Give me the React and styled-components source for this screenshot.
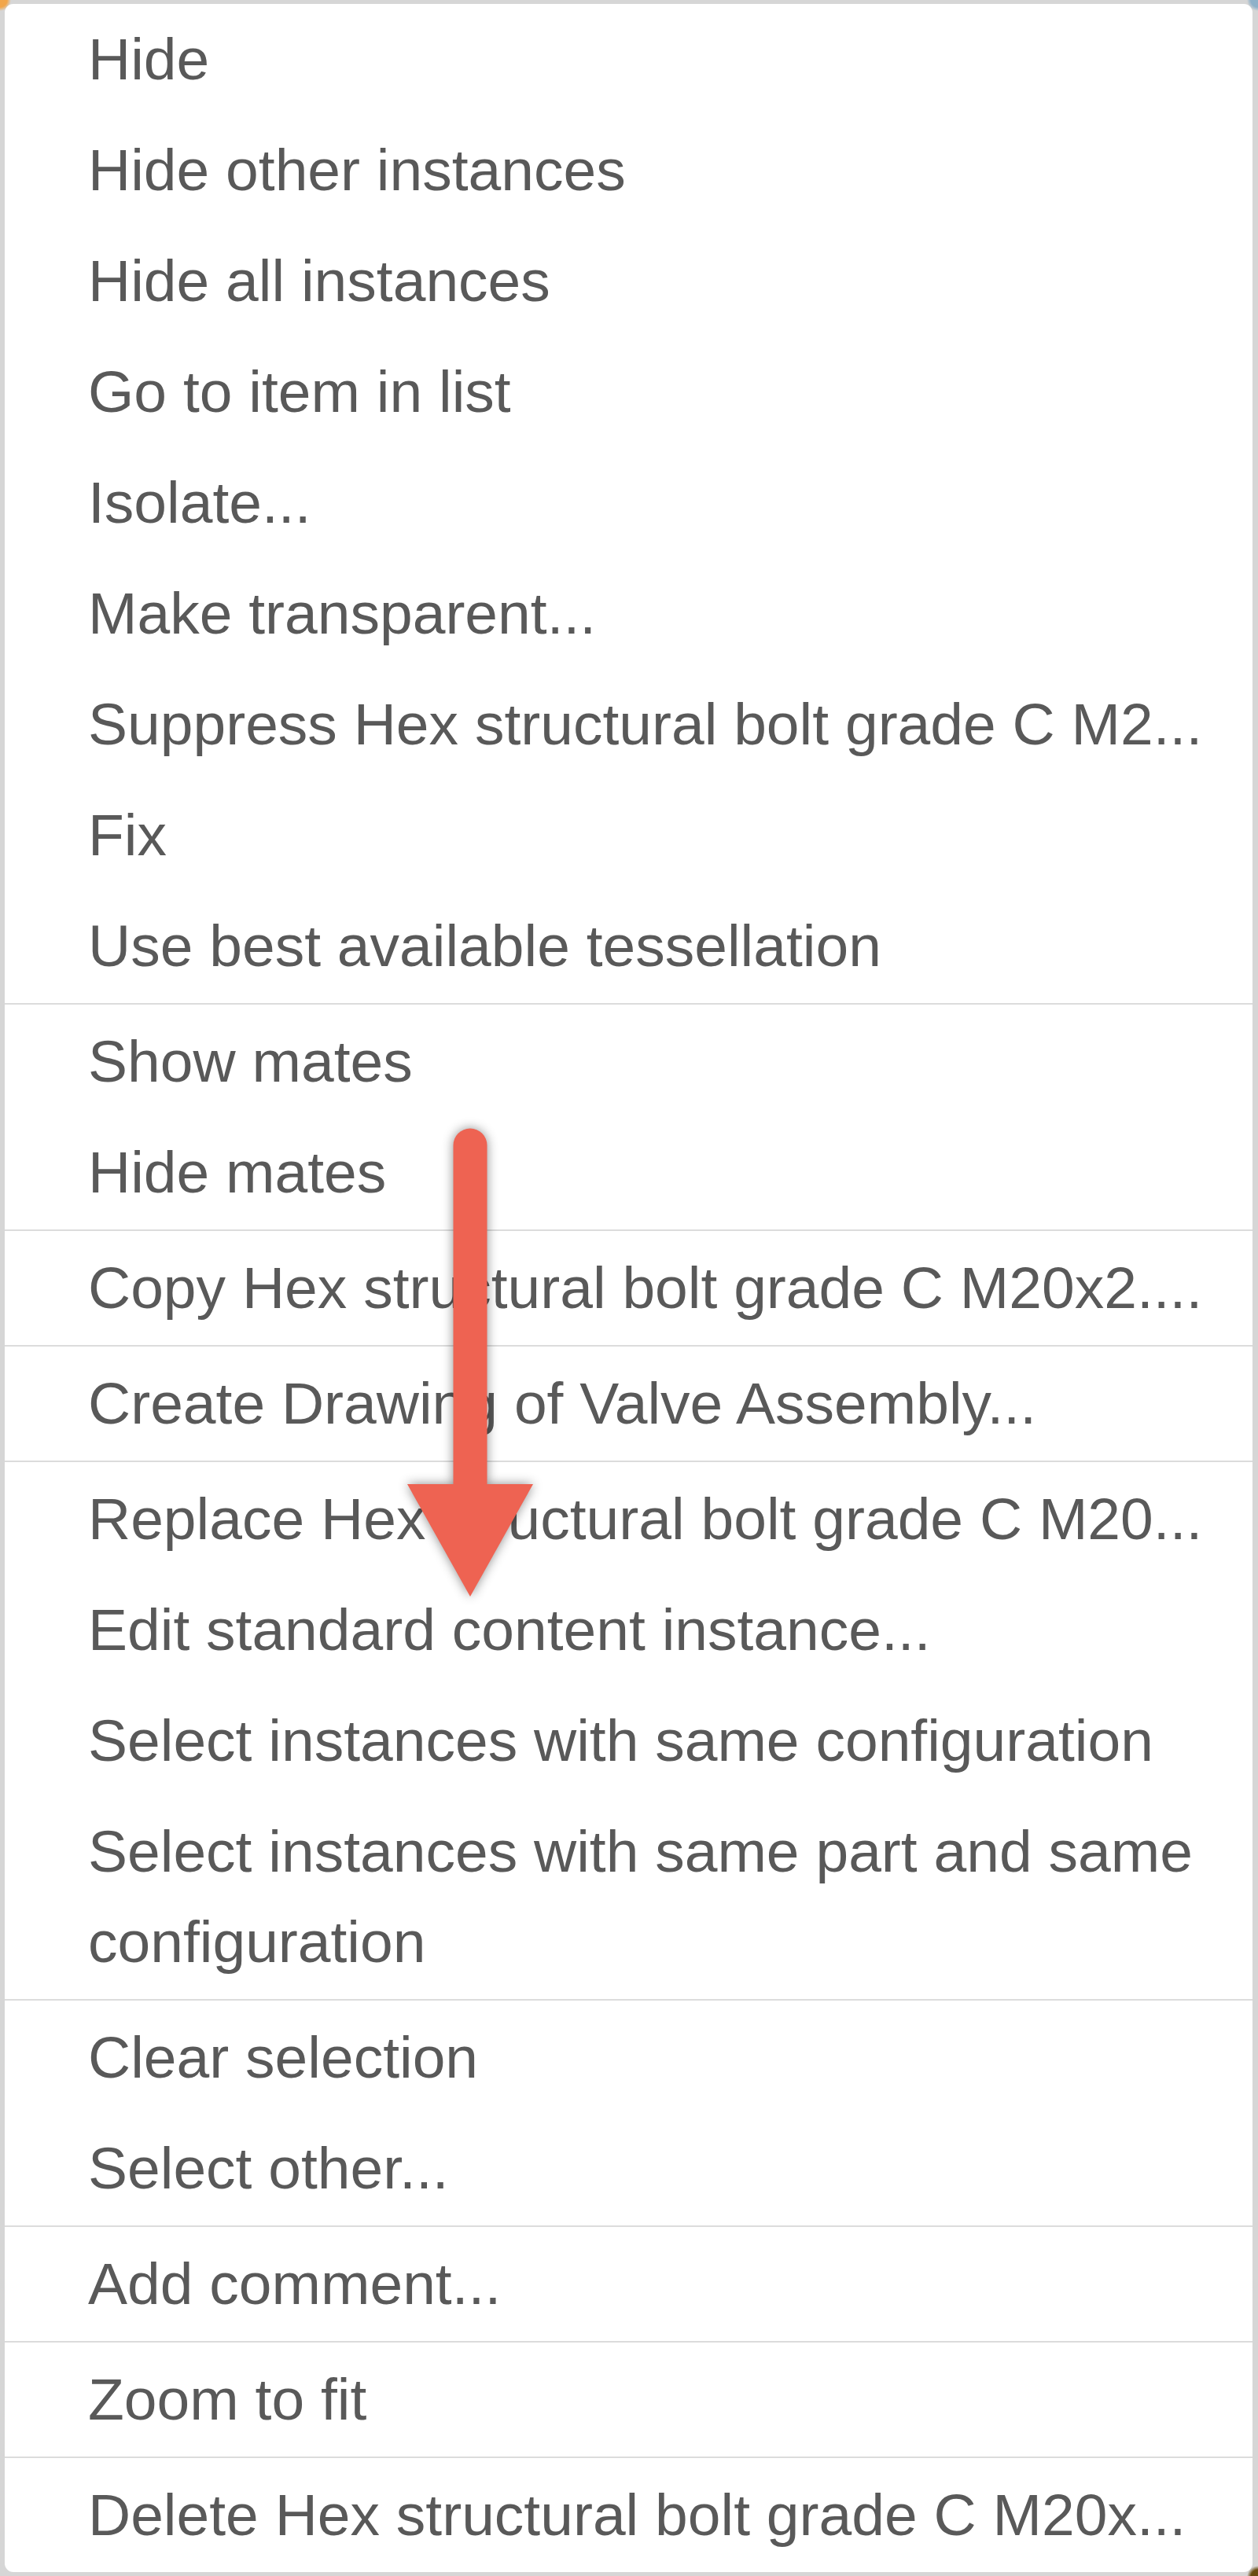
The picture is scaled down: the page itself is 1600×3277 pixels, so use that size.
import React from "react";
import styled, { createGlobalStyle } from "styled-components";

const GlobalStyle = createGlobalStyle`
  html, body {
    margin: 0;
    padding: 0;
  }
  body {
    background-color: #d6d6d6;
    background-image:
      radial-gradient(circle at 0 0, #f2a64a 0, #f2a64a 9px, transparent 14px),
      radial-gradient(circle at 100% 0, #8fb1c9 0, #8fb1c9 9px, transparent 14px),
      radial-gradient(circle at 100% 100%, #6a4d12 0, #6a4d12 9px, transparent 14px);
    background-repeat: no-repeat;
    min-height: 3277px;
  }
`;

const sections = [
  [
    "Hide",
    "Hide other instances",
    "Hide all instances",
    "Go to item in list",
    "Isolate...",
    "Make transparent...",
    "Suppress Hex structural bolt grade C M2...",
    "Fix",
    "Use best available tessellation",
  ],
  ["Show mates", "Hide mates"],
  ["Copy Hex structural bolt grade C M20x2...."],
  ["Create Drawing of Valve Assembly..."],
  [
    "Replace Hex structural bolt grade C M20...",
    "Edit standard content instance...",
    "Select instances with same configuration",
    "Select instances with same part and same configuration",
  ],
  ["Clear selection", "Select other..."],
  ["Add comment..."],
  ["Zoom to fit"],
  ["Delete Hex structural bolt grade C M20x..."],
];

const Page = styled.div`
  position: relative;
  padding: 5px 7px 6px 6px;
  min-height: 3277px;
  box-sizing: border-box;
`;

const Menu = styled.ul`
  list-style: none;
  margin: 0;
  padding: 0;
  background: #ffffff;
  border-radius: 11px;
  font-family: "Liberation Sans", Arial, sans-serif;
  font-size: 75px;
  color: #595959;
  overflow: hidden;
`;

const Group = styled.li`
  padding: ${({ first }) => (first ? "0 0 2px" : "2px 0")};
  border-top: ${({ first }) => (first ? "none" : "2px solid #dcdcdc")};
`;

const Item = styled.div`
  padding: 13px 30px 13px 106px;
  line-height: 115px;
  white-space: ${({ wrap }) => (wrap ? "normal" : "nowrap")};
  overflow: hidden;
  cursor: default;
`;

const Arrow = styled.svg`
  position: absolute;
  left: 500px;
  top: 1400px;
  width: 200px;
  height: 660px;
  overflow: visible;
  filter: drop-shadow(0 0 7px rgba(0, 0, 0, 0.45));
`;

export default function App() {
  return (
    <Page>
      <GlobalStyle />
      <Menu>
        {sections.map((items, i) => (
          <Group key={i} first={i === 0}>
            {items.map((label) => (
              <Item key={label} wrap={label.length > 44}>
                {label}
              </Item>
            ))}
          </Group>
        ))}
      </Menu>
      <Arrow viewBox="0 0 200 660">
        <line
          x1="98"
          y1="57"
          x2="98"
          y2="495"
          stroke="#ee6352"
          strokeWidth="43"
          strokeLinecap="round"
        />
        <polygon points="18,488 178,488 98,631" fill="#ee6352" />
      </Arrow>
    </Page>
  );
}
